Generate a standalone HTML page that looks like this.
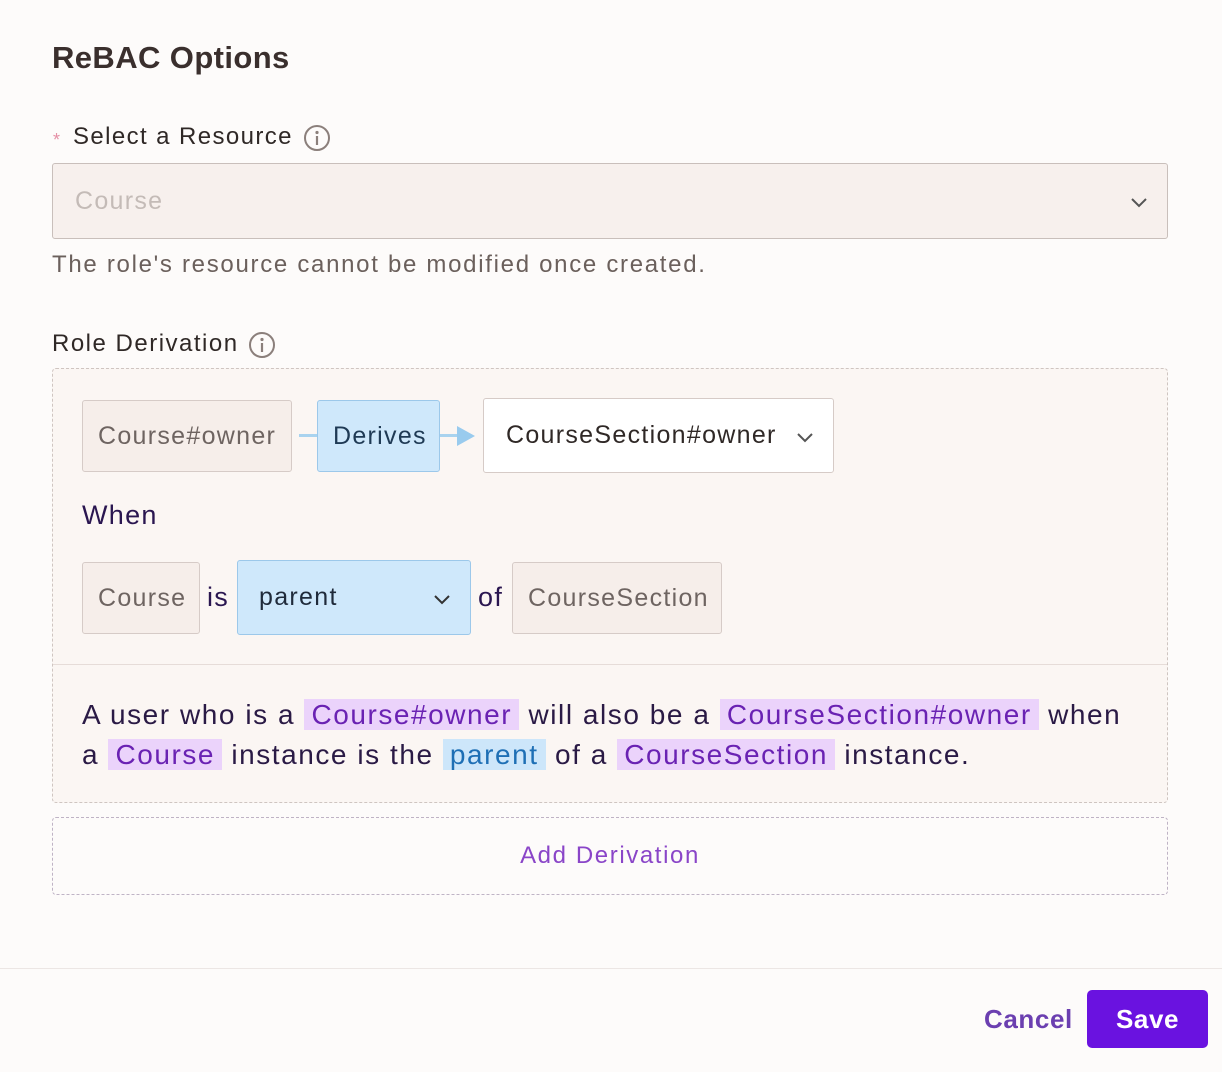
<!DOCTYPE html>
<html><head><style>
*{margin:0;padding:0;box-sizing:border-box}
body{width:1222px;height:1072px;background:#fdfbfa;font-family:"Liberation Sans",sans-serif;position:relative;overflow:hidden;color:#2f2826;letter-spacing:1.3px}
.a{position:absolute;white-space:nowrap}
.box{position:absolute;border:1px solid #d6cbc7;border-radius:3px;background:#f6eeea;display:flex;align-items:center;font-size:25px;color:#6e6461}
.hl{background:#ebd3fb;color:#6a22b3;padding:0 7px}
.hb{background:#cde6fa;color:#1e6fb5;padding:0 7px}
</style></head><body>
<div class="a" style="left:52px;top:40px;font-size:31px;font-weight:bold;color:#3a2f2d;letter-spacing:0.4px">ReBAC Options</div>
<div class="a" style="left:53px;top:130px;font-size:18px;color:#e58fa5">*</div>
<div class="a" style="left:73px;top:123px;font-size:24px;color:#2f2826;letter-spacing:1.4px">Select a Resource</div>
<svg class="a" style="left:303px;top:124px" width="28" height="28" viewBox="0 0 28 28"><circle cx="14" cy="14" r="12" fill="none" stroke="#8b7f7b" stroke-width="2"/><circle cx="14" cy="8.5" r="1.6" fill="#8b7f7b"/><path d="M14 12v9" stroke="#8b7f7b" stroke-width="2.2"/></svg>
<div class="box" style="left:52px;top:163px;width:1116px;height:76px;border-color:#c9bfbb;background:#f7f0ed;padding-left:22px;color:#c4bbb7">Course</div>
<svg class="a" style="left:1130px;top:195px" width="18" height="14" viewBox="0 0 18 14"><path d="M2 4l7 7 7-7" fill="none" stroke="#555" stroke-width="2"/></svg>
<div class="a" style="left:52px;top:251px;font-size:24px;color:#6b605c;letter-spacing:1.7px">The role's resource cannot be modified once created.</div>
<div class="a" style="left:52px;top:330px;font-size:24px;color:#2f2826;letter-spacing:1.5px">Role Derivation</div>
<svg class="a" style="left:248px;top:331px" width="28" height="28" viewBox="0 0 28 28"><circle cx="14" cy="14" r="12" fill="none" stroke="#8b7f7b" stroke-width="2"/><circle cx="14" cy="8.5" r="1.6" fill="#8b7f7b"/><path d="M14 12v9" stroke="#8b7f7b" stroke-width="2.2"/></svg>
<div class="a" style="left:52px;top:368px;width:1116px;height:435px;border:1px dashed #cfc5c1;border-radius:4px;background:#fbf6f3"></div>
<div class="a" style="left:53px;top:664px;width:1114px;height:1px;background:#e6dcd8"></div>
<div class="box" style="left:82px;top:400px;width:210px;height:72px;padding-left:15px">Course#owner</div>
<div class="a" style="left:299px;top:434px;width:19px;height:3px;background:#a9d3ef"></div>
<div class="box" style="left:317px;top:400px;width:123px;height:72px;background:#cfe8fb;border-color:#9cc8ea;color:#1f3a55;padding-left:15px">Derives</div>
<div class="a" style="left:440px;top:434px;width:20px;height:3px;background:#a9d3ef"></div>
<svg class="a" style="left:455px;top:425px" width="22" height="22" viewBox="0 0 22 22"><path d="M2 1l18 10-18 10z" fill="#99cbee"/></svg>
<div class="box" style="left:483px;top:398px;width:351px;height:75px;background:#fff;color:#2f2826;padding-left:22px">CourseSection#owner</div>
<svg class="a" style="left:796px;top:430px" width="18" height="14" viewBox="0 0 18 14"><path d="M2 4l7 7 7-7" fill="none" stroke="#555" stroke-width="2"/></svg>
<div class="a" style="left:82px;top:500px;font-size:27px;color:#2a1650">When</div>
<div class="box" style="left:82px;top:562px;width:118px;height:72px;padding-left:15px">Course</div>
<div class="a" style="left:207px;top:582px;font-size:27px;color:#2a1650">is</div>
<div class="box" style="left:237px;top:560px;width:234px;height:75px;background:#cfe8fb;border-color:#9cc8ea;color:#1f2a3a;padding-left:21px">parent</div>
<svg class="a" style="left:433px;top:592px" width="18" height="14" viewBox="0 0 18 14"><path d="M2 4l7 7 7-7" fill="none" stroke="#333" stroke-width="2"/></svg>
<div class="a" style="left:478px;top:582px;font-size:27px;color:#2a1650">of</div>
<div class="box" style="left:512px;top:562px;width:210px;height:72px;padding-left:15px">CourseSection</div>
<div class="a" style="left:82px;top:695px;font-size:28px;line-height:40px;color:#2a1a45;letter-spacing:1.55px">A user who is a <span class="hl">Course#owner</span> will also be a <span class="hl">CourseSection#owner</span> when<br>a <span class="hl">Course</span> instance is the <span class="hb">parent</span> of a <span class="hl">CourseSection</span> instance.</div>
<div class="a" style="left:52px;top:817px;width:1116px;height:78px;border:1px dashed #bfb3c5;border-radius:4px;display:flex;align-items:center;justify-content:center;font-size:24px;color:#8a45c8;letter-spacing:1.6px">Add Derivation</div>
<div class="a" style="left:0;top:968px;width:1222px;height:1px;background:#ece6e4"></div>
<div class="a" style="left:984px;top:1004px;font-size:26px;font-weight:bold;color:#6b3fb0;letter-spacing:0.6px">Cancel</div>
<div class="a" style="left:1087px;top:990px;width:121px;height:58px;background:#6a12e0;border-radius:5px;color:#fff;font-size:26px;font-weight:bold;display:flex;align-items:center;justify-content:center;letter-spacing:0.6px">Save</div>
</body></html>
